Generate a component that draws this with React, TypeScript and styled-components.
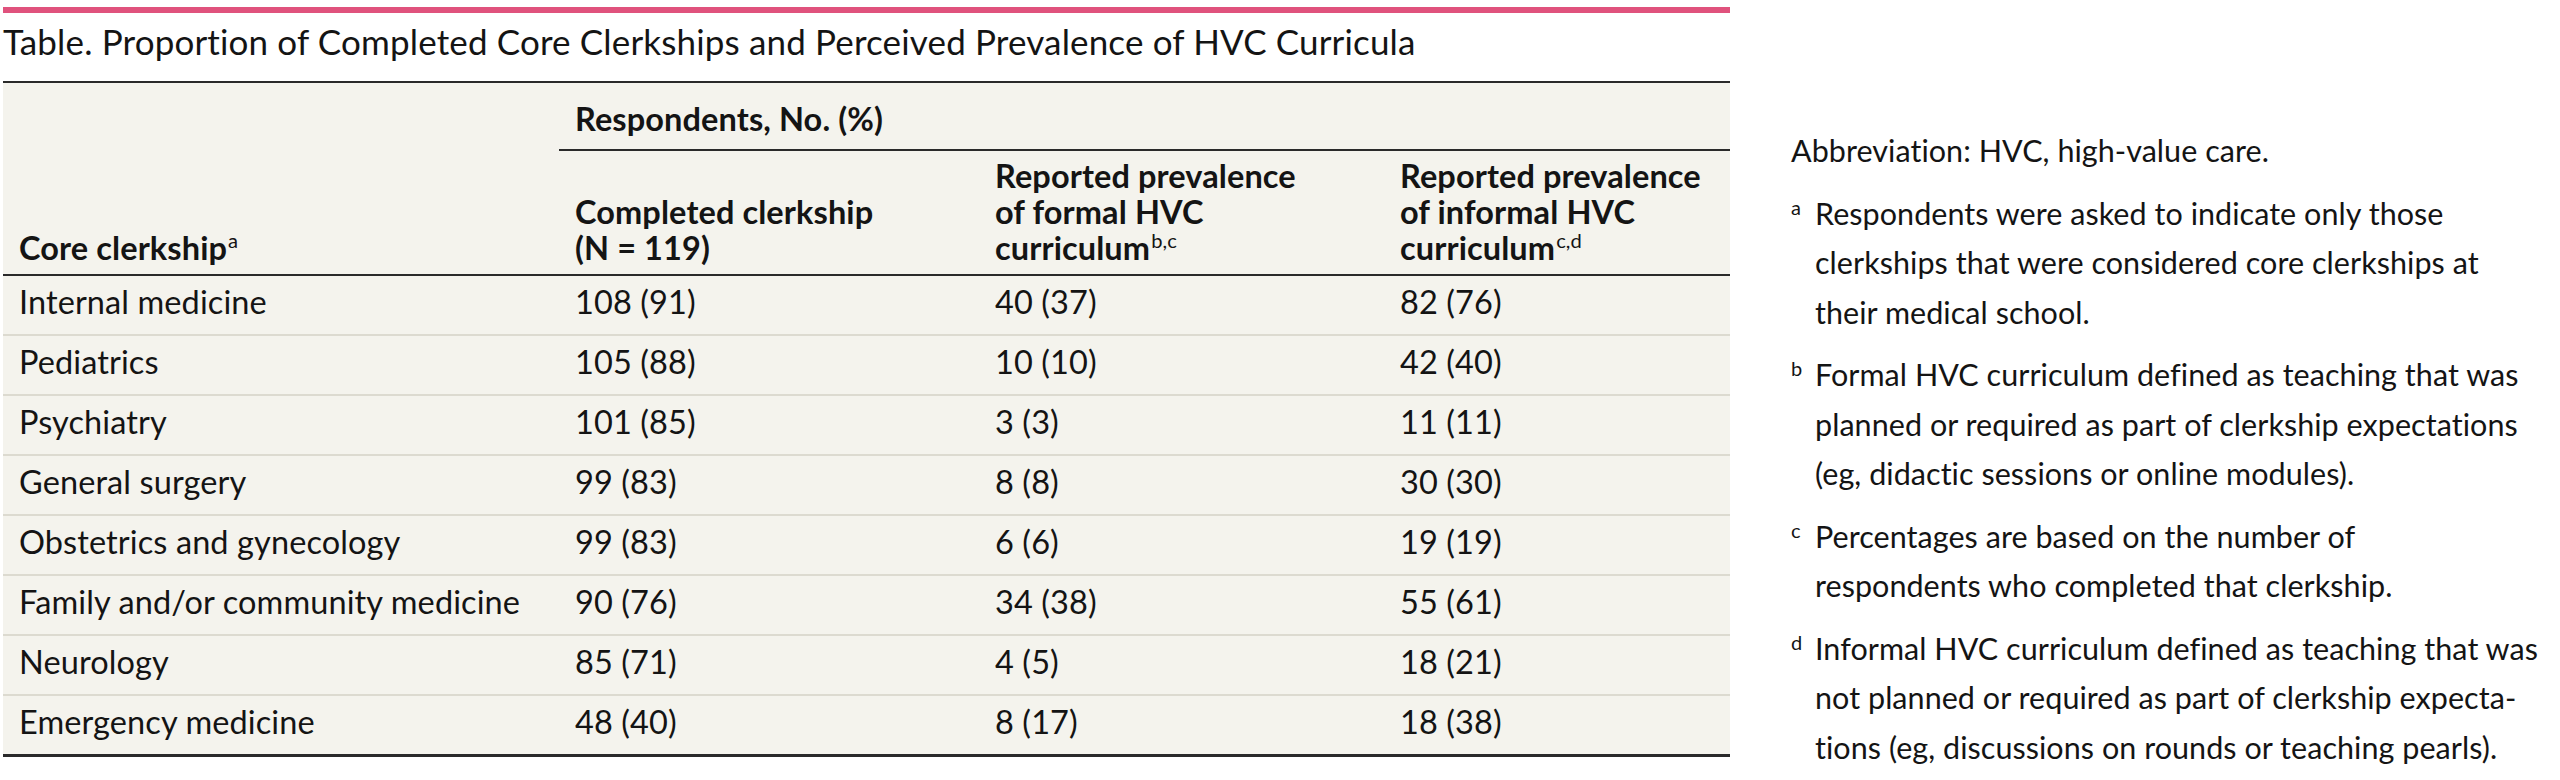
import React from "react";
import styled, { createGlobalStyle } from "styled-components";

const GlobalStyle = createGlobalStyle`
  html, body {
    margin: 0;
    padding: 0;
    background: #ffffff;
  }
  body {
    font-family: Lato, "Open Sans", "Noto Sans", sans-serif;
    color: #141414;
  }
`;

type Row = { name: string; completed: string; formal: string; informal: string };

const rows: Row[] = [
  { name: "Internal medicine", completed: "108 (91)", formal: "40 (37)", informal: "82 (76)" },
  { name: "Pediatrics", completed: "105 (88)", formal: "10 (10)", informal: "42 (40)" },
  { name: "Psychiatry", completed: "101 (85)", formal: "3 (3)", informal: "11 (11)" },
  { name: "General surgery", completed: "99 (83)", formal: "8 (8)", informal: "30 (30)" },
  { name: "Obstetrics and gynecology", completed: "99 (83)", formal: "6 (6)", informal: "19 (19)" },
  { name: "Family and/or community medicine", completed: "90 (76)", formal: "34 (38)", informal: "55 (61)" },
  { name: "Neurology", completed: "85 (71)", formal: "4 (5)", informal: "18 (21)" },
  { name: "Emergency medicine", completed: "48 (40)", formal: "8 (17)", informal: "18 (38)" },
];

const notes: { mark: string; lines: string[] }[] = [
  {
    mark: "a",
    lines: [
      "Respondents were asked to indicate only those",
      "clerkships that were considered core clerkships at",
      "their medical school.",
    ],
  },
  {
    mark: "b",
    lines: [
      "Formal HVC curriculum defined as teaching that was",
      "planned or required as part of clerkship expectations",
      "(eg, didactic sessions or online modules).",
    ],
  },
  {
    mark: "c",
    lines: ["Percentages are based on the number of", "respondents who completed that clerkship."],
  },
  {
    mark: "d",
    lines: [
      "Informal HVC curriculum defined as teaching that was",
      "not planned or required as part of clerkship expecta-",
      "tions (eg, discussions on rounds or teaching pearls).",
    ],
  },
];

const App = () => {
  return (
    <>
      <GlobalStyle />
      <Page>
        <Figure>
          <AccentBar />
          <Title>Table. Proportion of Completed Core Clerkships and Perceived Prevalence of HVC Curricula</Title>
          <DataTable>
            <colgroup>
              <col style={{ width: 556 }} />
              <col style={{ width: 420 }} />
              <col style={{ width: 405 }} />
              <col style={{ width: 346 }} />
            </colgroup>
            <thead>
              <tr>
                <HeadCell rowSpan={2}>
                  Core clerkship<Sup>a</Sup>
                </HeadCell>
                <SpanHead colSpan={3}>Respondents, No. (%)</SpanHead>
              </tr>
              <tr>
                <HeadCell>
                  Completed clerkship
                  <br />
                  (N = 119)
                </HeadCell>
                <HeadCell>
                  Reported prevalence
                  <br />
                  of formal HVC
                  <br />
                  curriculum<Sup>b,c</Sup>
                </HeadCell>
                <HeadCell>
                  Reported prevalence
                  <br />
                  of informal HVC
                  <br />
                  curriculum<Sup>c,d</Sup>
                </HeadCell>
              </tr>
            </thead>
            <tbody>
              {rows.map((r) => (
                <BodyRow key={r.name}>
                  <Cell>{r.name}</Cell>
                  <Cell>{r.completed}</Cell>
                  <Cell>{r.formal}</Cell>
                  <Cell>{r.informal}</Cell>
                </BodyRow>
              ))}
            </tbody>
          </DataTable>
        </Figure>
        <Notes>
          <Abbrev>Abbreviation: HVC, high-value care.</Abbrev>
          {notes.map((n) => (
            <Note key={n.mark}>
              <Mark>{n.mark}</Mark>
              <NoteText>
                {n.lines.map((l) => (
                  <Line key={l}>{l}</Line>
                ))}
              </NoteText>
            </Note>
          ))}
        </Notes>
      </Page>
    </>
  );
};

const Page = styled.div`
  display: flex;
  align-items: flex-start;
  padding: 7px 0 0 3px;
  gap: 61px;
  width: 2557px;
  height: 773px;
  overflow: hidden;
`;

const Figure = styled.section`
  width: 1727px;
  flex: none;
  display: flex;
  flex-direction: column;
`;

const AccentBar = styled.div`
  height: 6px;
  background: #e0527d;
`;

const Title = styled.h1`
  margin: 9px 0 21px;
  font-size: 35px;
  line-height: 38px;
  font-weight: 400;
  letter-spacing: 0.15px;
  white-space: nowrap;
`;

const DataTable = styled.table`
  width: 1727px;
  table-layout: fixed;
  border-collapse: collapse;
  background: #f4f3ed;
  border-top: 2px solid #2a2a2a;
  border-bottom: 3px solid #2a2a2a;
  font-size: 32.5px;
  line-height: 36px;
  letter-spacing: 0.1px;

  thead tr:last-child th {
    border-bottom: 2px solid #2a2a2a;
  }
`;

const HeadCell = styled.th`
  text-align: left;
  vertical-align: bottom;
  font-weight: 700;
  padding: 7px 16px 8px;
  white-space: nowrap;
  border-bottom: 2px solid #2a2a2a;
`;

const SpanHead = styled(HeadCell)`
  height: 68px;
  box-sizing: border-box;
  padding-top: 0;
  padding-bottom: 12px;
`;

const Sup = styled.sup`
  font-size: 0.62em;
  line-height: 0;
  font-weight: 400;
  vertical-align: baseline;
  position: relative;
  top: -0.6em;
  margin-left: 1px;
`;

const BodyRow = styled.tr`
  & + & td {
    border-top: 2px solid #dcdad0;
  }
`;

const Cell = styled.td`
  padding: 8px 16px 14px;
  white-space: nowrap;
  font-weight: 400;
`;

const Notes = styled.aside`
  flex: 1;
  min-width: 0;
  padding-top: 119px;
  font-size: 30.5px;
  line-height: 49.5px;
  letter-spacing: 0.05px;
`;

const Abbrev = styled.p`
  margin: 0;
  white-space: nowrap;
`;

const Note = styled.div`
  display: grid;
  grid-template-columns: 24px 1fr;
  margin-top: 13px;
`;

const Mark = styled.span`
  font-size: 20px;
  line-height: 20px;
  padding-top: 8px;
`;

const NoteText = styled.div`
  display: flex;
  flex-direction: column;
`;

const Line = styled.span`
  white-space: nowrap;
`;

export default App;
